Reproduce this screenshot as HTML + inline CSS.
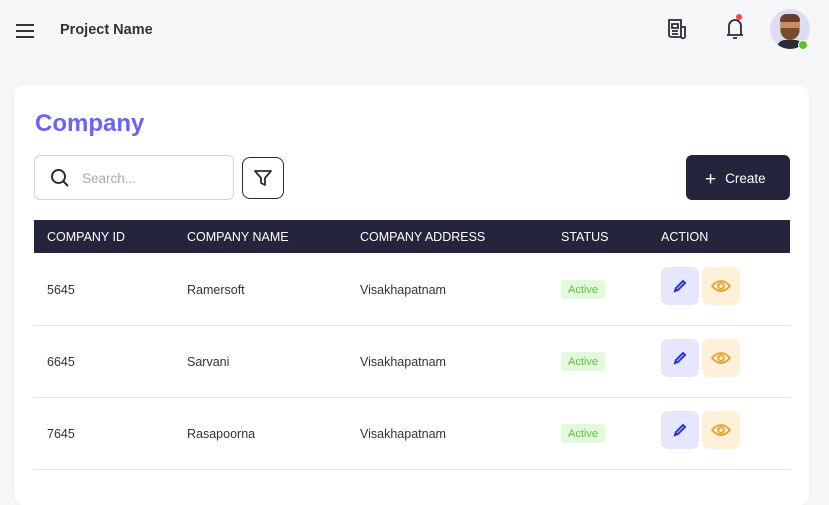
<!DOCTYPE html>
<html><head><style>
*{box-sizing:border-box;margin:0;padding:0}
body{width:829px;height:490px;overflow:hidden;background:#f6f6f9;font-family:"Liberation Sans",sans-serif;color:#2a2a3a;position:relative}
.abs{position:absolute}
.card{left:14px;top:85px;width:795px;height:420px;background:#fff;border-radius:10px;box-shadow:0 0 4px rgba(0,0,0,.04)}
.hdr{left:34px;top:220px;width:756px;height:33px;background:#24253d;color:#fff;font-size:12.5px}
.hdr span{position:absolute;top:10px}
.row{left:34px;width:756px;height:72px;border-bottom:1px solid #e6e6ec;font-size:12.5px;color:#333}
.row span{position:absolute;top:29px}
.badge{position:absolute;left:527px;top:26px;width:44px;height:19px;background:#e3f9dc;color:#5cc33a;font-size:11px;border-radius:3px;display:flex;align-items:center;justify-content:center}
.btn{position:absolute;top:13px;width:38px;height:38px;border-radius:7px;display:flex;align-items:center;justify-content:center}
</style></head><body>
<svg class="abs" style="left:15px;top:22px" width="20" height="18"><path d="M1 3H19M1 9H19M1 15H19" stroke="#333" stroke-width="2"/></svg>
<div class="abs" style="left:60px;top:22px;font-size:14.5px;font-weight:bold;color:#333">Project Name</div>
<svg class="abs" style="left:666px;top:18px" width="22" height="22" viewBox="0 0 22 22" fill="none" stroke="#2a2a3a" stroke-width="1.8"><path d="M3 2H15V19H5A2 2 0 0 1 3 17Z"/><path d="M15 9H19V17A2 2 0 0 1 15 19"/><path d="M6 6H12V10H6ZM6 13H12M6 16H12"/></svg>
<svg class="abs" style="left:723px;top:13px" width="26" height="28" viewBox="0 0 26 28" fill="none" stroke="#2a2a3a" stroke-width="1.8"><path d="M4 22H20M6 22V13A6 6 0 0 1 18 13V22M10 25H14"/><circle cx="16" cy="4" r="3" fill="#f44" stroke="none"/></svg>
<div class="abs" style="left:770px;top:9px;width:40px;height:40px;border-radius:50%;background:#dcdcf6;overflow:hidden">
<div class="abs" style="left:10px;top:6px;width:20px;height:24px;border-radius:9px;background:#c98d6a"></div>
<div class="abs" style="left:10px;top:5px;width:20px;height:8px;border-radius:8px 8px 2px 2px;background:#6b3e27"></div>
<div class="abs" style="left:11px;top:19px;width:18px;height:12px;border-radius:0 0 9px 9px;background:#7a4a2e"></div>
<div class="abs" style="left:7px;top:31px;width:26px;height:12px;border-radius:8px 8px 0 0;background:#2d2d35"></div>
</div>
<div class="abs" style="left:798px;top:40px;width:10px;height:10px;border-radius:50%;background:#5ac625;border:1.5px solid #fff"></div>
<div class="abs card"></div>
<div class="abs" style="left:35px;top:110px;font-size:24px;font-weight:bold;color:#6a63f5">Company</div>
<div class="abs" style="left:34px;top:155px;width:200px;height:45px;border:1px solid #d3d3d8;border-radius:6px"></div>
<svg class="abs" style="left:50px;top:168px" width="20" height="20" fill="none" stroke="#2a2a3a" stroke-width="2"><circle cx="8.5" cy="8.5" r="6.5"/><path d="M13.5 13.5L18 18"/></svg>
<div class="abs" style="left:82px;top:171px;font-size:13.5px;color:#aaa">Search...</div>
<div class="abs" style="left:242px;top:157px;width:42px;height:42px;border:1.3px solid #2a2a3a;border-radius:8px"></div>
<svg class="abs" style="left:253px;top:168px" width="20" height="20" fill="none" stroke="#2a2a3a" stroke-width="1.8" stroke-linejoin="round"><path d="M2 3H18L12 10V17L8 15V10Z"/></svg>
<div class="abs" style="left:686px;top:155px;width:104px;height:45px;background:#24253d;border-radius:6px;color:#fff;font-size:13.5px;line-height:47px;padding-left:19px"><span style="font-size:19px;vertical-align:-2px;margin-right:9px">+</span>Create</div>
<div class="abs hdr"><span style="left:13px">COMPANY ID</span><span style="left:153px">COMPANY NAME</span><span style="left:326px">COMPANY ADDRESS</span><span style="left:527px">STATUS</span><span style="left:627px">ACTION</span></div>
<div class="abs row" style="top:254px"><span style="left:13px">5645</span><span style="left:153px">Ramersoft</span><span style="left:326px">Visakhapatnam</span><div class="badge">Active</div>
<div class="btn" style="left:627px;background:#e6e6fc"><svg width="16" height="16" fill="none" stroke="#2a35d6" stroke-width="2"><path d="M3 13L4 10L11 3L13 5L6 12Z"/></svg></div>
<div class="btn" style="left:668px;background:#fff0d9"><svg width="20" height="14" fill="none" stroke="#e3a12a" stroke-width="1.8"><path d="M1 7Q10 -3 19 7Q10 17 1 7Z"/><circle cx="10" cy="7" r="2.8"/></svg></div></div>
<div class="abs row" style="top:326px"><span style="left:13px">6645</span><span style="left:153px">Sarvani</span><span style="left:326px">Visakhapatnam</span><div class="badge">Active</div>
<div class="btn" style="left:627px;background:#e6e6fc"><svg width="16" height="16" fill="none" stroke="#2a35d6" stroke-width="2"><path d="M3 13L4 10L11 3L13 5L6 12Z"/></svg></div>
<div class="btn" style="left:668px;background:#fff0d9"><svg width="20" height="14" fill="none" stroke="#e3a12a" stroke-width="1.8"><path d="M1 7Q10 -3 19 7Q10 17 1 7Z"/><circle cx="10" cy="7" r="2.8"/></svg></div></div>
<div class="abs row" style="top:398px"><span style="left:13px">7645</span><span style="left:153px">Rasapoorna</span><span style="left:326px">Visakhapatnam</span><div class="badge">Active</div>
<div class="btn" style="left:627px;background:#e6e6fc"><svg width="16" height="16" fill="none" stroke="#2a35d6" stroke-width="2"><path d="M3 13L4 10L11 3L13 5L6 12Z"/></svg></div>
<div class="btn" style="left:668px;background:#fff0d9"><svg width="20" height="14" fill="none" stroke="#e3a12a" stroke-width="1.8"><path d="M1 7Q10 -3 19 7Q10 17 1 7Z"/><circle cx="10" cy="7" r="2.8"/></svg></div></div>
</body></html>
